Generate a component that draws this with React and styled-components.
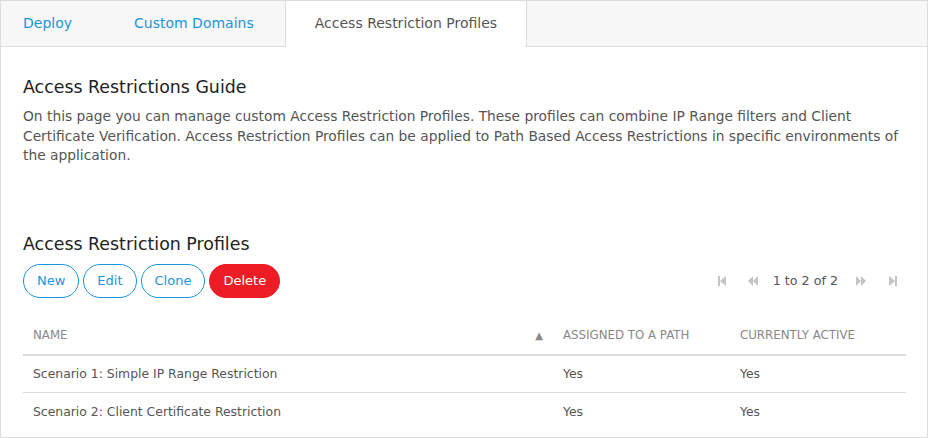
import React from 'react';
import styled, { createGlobalStyle } from 'styled-components';

const GlobalStyle = createGlobalStyle`
  html, body {
    margin: 0;
    padding: 0;
    background: #fff;
    font-family: "DejaVu Sans", Verdana, sans-serif;
  }
  * { box-sizing: border-box; }
`;

const Frame = styled.div`
  width: 928px;
  height: 438px;
  border: 1px solid #dcdcdc;
  overflow: hidden;
  background: #fff;
`;

const TabBar = styled.div`
  display: flex;
  height: 46px;
  background: #f7f7f7;
  border-bottom: 1px solid #dcdcdc;
`;

const Tab = styled.div`
  display: flex;
  align-items: center;
  height: ${p => (p.$active ? '46px' : '45px')};
  padding: 0 ${p => (p.$active ? '29px' : '30px')} 2px;
  font-size: 14px;
  color: ${p => (p.$active ? '#555' : '#1b95d8')};
  background: ${p => (p.$active ? '#fff' : 'transparent')};
  border-left: 1px solid ${p => (p.$active ? '#dcdcdc' : 'transparent')};
  border-right: 1px solid ${p => (p.$active ? '#dcdcdc' : 'transparent')};
  &:first-child { padding-left: 21px; }
`;

const Content = styled.div`
  padding: 30px 21px 0 22px;
`;

const Heading = styled.h2`
  margin: 0 0 10px;
  font-size: 17.4px;
  font-weight: 500;
  color: #222;
`;

const Guide = styled.p`
  margin: 0;
  font-size: 13.8px;
  line-height: 19.5px;
  color: #555;
`;

const Section = styled.section`
  margin-top: 68px;
`;

const Toolbar = styled.div`
  display: flex;
  align-items: center;
  justify-content: space-between;
  margin-top: 2px;
`;

const Buttons = styled.div`
  display: flex;
  gap: 4px;
`;

const Button = styled.button`
  height: 34px;
  padding: 0 13px;
  border-radius: 17px;
  font-family: inherit;
  font-size: 13px;
  border: 1px solid ${p => (p.$danger ? '#ee1c25' : '#1b95d8')};
  background: ${p => (p.$danger ? '#ee1c25' : '#fff')};
  color: ${p => (p.$danger ? '#fff' : '#1b95d8')};
`;

const Pager = styled.div`
  display: flex;
  align-items: center;
  margin-right: 8px;
  font-size: 12.7px;
  color: #555;
`;

const PageIcon = styled.svg`
  width: 10px;
  height: 10px;
  margin-left: ${p => p.$ml || 0}px;
  margin-right: ${p => p.$mr || 0}px;
  fill: #c4c4c4;
`;

const Table = styled.table`
  width: 100%;
  margin-top: 15px;
  border-collapse: collapse;
`;

const Th = styled.th`
  position: relative;
  height: 42px;
  padding: 4px 10px 0;
  text-align: left;
  font-size: 11.8px;
  font-weight: normal;
  color: #888;
  border-bottom: 2px solid #dcdcdc;
  width: ${p => p.$w || 'auto'};
`;

const SortArrow = styled.span`
  position: absolute;
  right: 10px;
  top: 17px;
  font-size: 10px;
  color: #888;
`;

const Td = styled.td`
  height: 38px;
  padding: 0 10px;
  font-size: 12.4px;
  color: #555;
  border-bottom: ${p => (p.$last ? 'none' : '1px solid #dcdcdc')};
`;

const rows = [
  'Scenario 1: Simple IP Range Restriction',
  'Scenario 2: Client Certificate Restriction',
];

export default function App() {
  return (
    <>
      <GlobalStyle />
      <Frame>
        <TabBar>
          <Tab>Deploy</Tab>
          <Tab>Custom Domains</Tab>
          <Tab $active>Access Restriction Profiles</Tab>
        </TabBar>
        <Content>
          <Heading>Access Restrictions Guide</Heading>
          <Guide>
            On this page you can manage custom Access Restriction Profiles. These profiles can combine IP Range filters and Client
            Certificate Verification. Access Restriction Profiles can be applied to Path Based Access Restrictions in specific environments of
            the application.
          </Guide>
          <Section>
            <Heading>Access Restriction Profiles</Heading>
            <Toolbar>
              <Buttons>
                <Button>New</Button>
                <Button>Edit</Button>
                <Button>Clone</Button>
                <Button $danger>Delete</Button>
              </Buttons>
              <Pager>
                <PageIcon viewBox="0 0 10 10" $mr={21}>
                  <rect x="1" y="0" width="2" height="10" /><polygon points="9,0 9,10 3,5" />
                </PageIcon>
                <PageIcon viewBox="0 0 10 10" $mr={15}>
                  <polygon points="5,0 5,10 0,5" /><polygon points="10,0 10,10 5,5" />
                </PageIcon>
                <span>1 to 2 of 2</span>
                <PageIcon viewBox="0 0 10 10" $ml={18}>
                  <polygon points="0,0 5,5 0,10" /><polygon points="5,0 10,5 5,10" />
                </PageIcon>
                <PageIcon viewBox="0 0 10 10" $ml={22}>
                  <polygon points="1,0 7,5 1,10" /><rect x="7" y="0" width="2" height="10" />
                </PageIcon>
              </Pager>
            </Toolbar>
            <Table>
              <thead>
                <tr>
                  <Th $w="530px">NAME<SortArrow>▲</SortArrow></Th>
                  <Th $w="177px">ASSIGNED TO A PATH</Th>
                  <Th>CURRENTLY ACTIVE</Th>
                </tr>
              </thead>
              <tbody>
                {rows.map((r, i) => (
                  <tr key={r}>
                    <Td $last={i === rows.length - 1}>{r}</Td>
                    <Td $last={i === rows.length - 1}>Yes</Td>
                    <Td $last={i === rows.length - 1}>Yes</Td>
                  </tr>
                ))}
              </tbody>
            </Table>
          </Section>
        </Content>
      </Frame>
    </>
  );
}
